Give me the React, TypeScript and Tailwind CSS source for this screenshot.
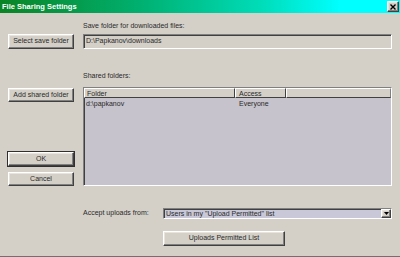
import type { ReactNode } from "react";

const raised =
  "border border-t-white border-l-white border-r-[#404040] border-b-[#404040] shadow-[inset_-1px_-1px_0_#808080,inset_1px_1px_0_#e8e4dc]";
const sunken =
  "border border-t-[#808080] border-l-[#808080] border-r-white border-b-white shadow-[inset_1px_1px_0_#404040]";

function Button({
  children,
  className = "",
  isDefault = false,
}: {
  children: ReactNode;
  className?: string;
  isDefault?: boolean;
}) {
  return (
    <div
      className={`flex items-center justify-center bg-[#d4d0c8] ${raised} ${
        isDefault ? "outline outline-1 outline-[#303030]" : ""
      } ${className}`}
    >
      {children}
    </div>
  );
}

function TitleBar() {
  return (
    <div className="flex h-[13px] items-center justify-between bg-[linear-gradient(to_right,#0a8424,#00b070_35%,#00dcb8_65%,#00ffff_85%)] pl-[2px] pr-[1px]">
      <span className="text-[7.5px] font-bold leading-none text-white">
        File Sharing Settings
      </span>
      <div className={`grid h-[11px] w-[12px] place-items-center bg-[#d4d0c8] ${raised}`}>
        <svg width="6" height="6" viewBox="0 0 6 6" aria-hidden="true">
          <path d="M0.5 0.5 L5.5 5.5 M5.5 0.5 L0.5 5.5" stroke="#000" strokeWidth="1.4" />
        </svg>
      </div>
    </div>
  );
}

function SharedList() {
  return (
    <div className={`flex h-[99px] w-[309px] flex-col bg-[#c6c3cc] ${sunken}`}>
      <div className="flex h-[10px] shrink-0 bg-[#d4d0c8] leading-[9px]">
        <div className="w-[151px] border border-t-white border-l-white border-r-[#404040] border-b-[#404040] pl-[2px]">
          Folder
        </div>
        <div className="w-[51px] border border-t-white border-l-white border-r-[#404040] border-b-[#404040] pl-[3px]">
          Access
        </div>
        <div className="flex-1 border border-t-white border-l-white border-r-[#808080] border-b-[#404040]" />
      </div>
      <div className="flex h-[11px] items-center leading-none">
        <span className="w-[152px] pl-[2px]">d:\papkanov</span>
        <span className="pl-[3px]">Everyone</span>
      </div>
    </div>
  );
}

export default function App() {
  return (
    <div className="flex h-[257px] w-[400px] flex-col overflow-hidden border-b border-[#707070] bg-[#d4d0c8] font-['Liberation_Sans',Arial,sans-serif] text-[7px] text-[#2a2a2a]">
      <TitleBar />

      <div className="flex flex-col px-[8px]">
        <div className="mt-[8px] h-[9px] pl-[75px] leading-[9px]">
          Save folder for downloaded files:
        </div>

        <div className="mt-[4px] flex gap-[9px]">
          <Button className="h-[15px] w-[66px]">Select save folder</Button>
          <div className={`flex h-[15px] w-[309px] items-center pl-[2px] ${sunken}`}>
            D:\Papkanov\downloads
          </div>
        </div>

        <div className="mt-[22px] h-[9px] pl-[75px] leading-[9px]">Shared folders:</div>

        <div className="mt-[7px] flex gap-[9px]">
          <div className="flex w-[66px] flex-col">
            <Button className="mt-[1px] h-[14px]">Add shared folder</Button>
            <Button className="mt-[50px] h-[14px]" isDefault>
              OK
            </Button>
            <Button className="mt-[6px] h-[14px]">Cancel</Button>
          </div>
          <SharedList />
        </div>

        <div className="mt-[22px] flex items-center pl-[75px]">
          <span className="w-[80px]">Accept uploads from:</span>
          <div className={`flex h-[11px] w-[229px] items-center bg-[#c8c8d8] ${sunken}`}>
            <span className="flex-1 pl-[2px] leading-none">
              Users in my "Upload Permitted" list
            </span>
            <div className={`grid h-[9px] w-[10px] place-items-center bg-[#d4d0c8] ${raised}`}>
              <svg width="5" height="3" viewBox="0 0 5 3" aria-hidden="true">
                <path d="M0 0 H5 L2.5 3 Z" fill="#000" />
              </svg>
            </div>
          </div>
        </div>

        <div className="mt-[12px] pl-[155px]">
          <Button className="h-[15px] w-[122px]">Uploads Permitted List</Button>
        </div>
      </div>
    </div>
  );
}
